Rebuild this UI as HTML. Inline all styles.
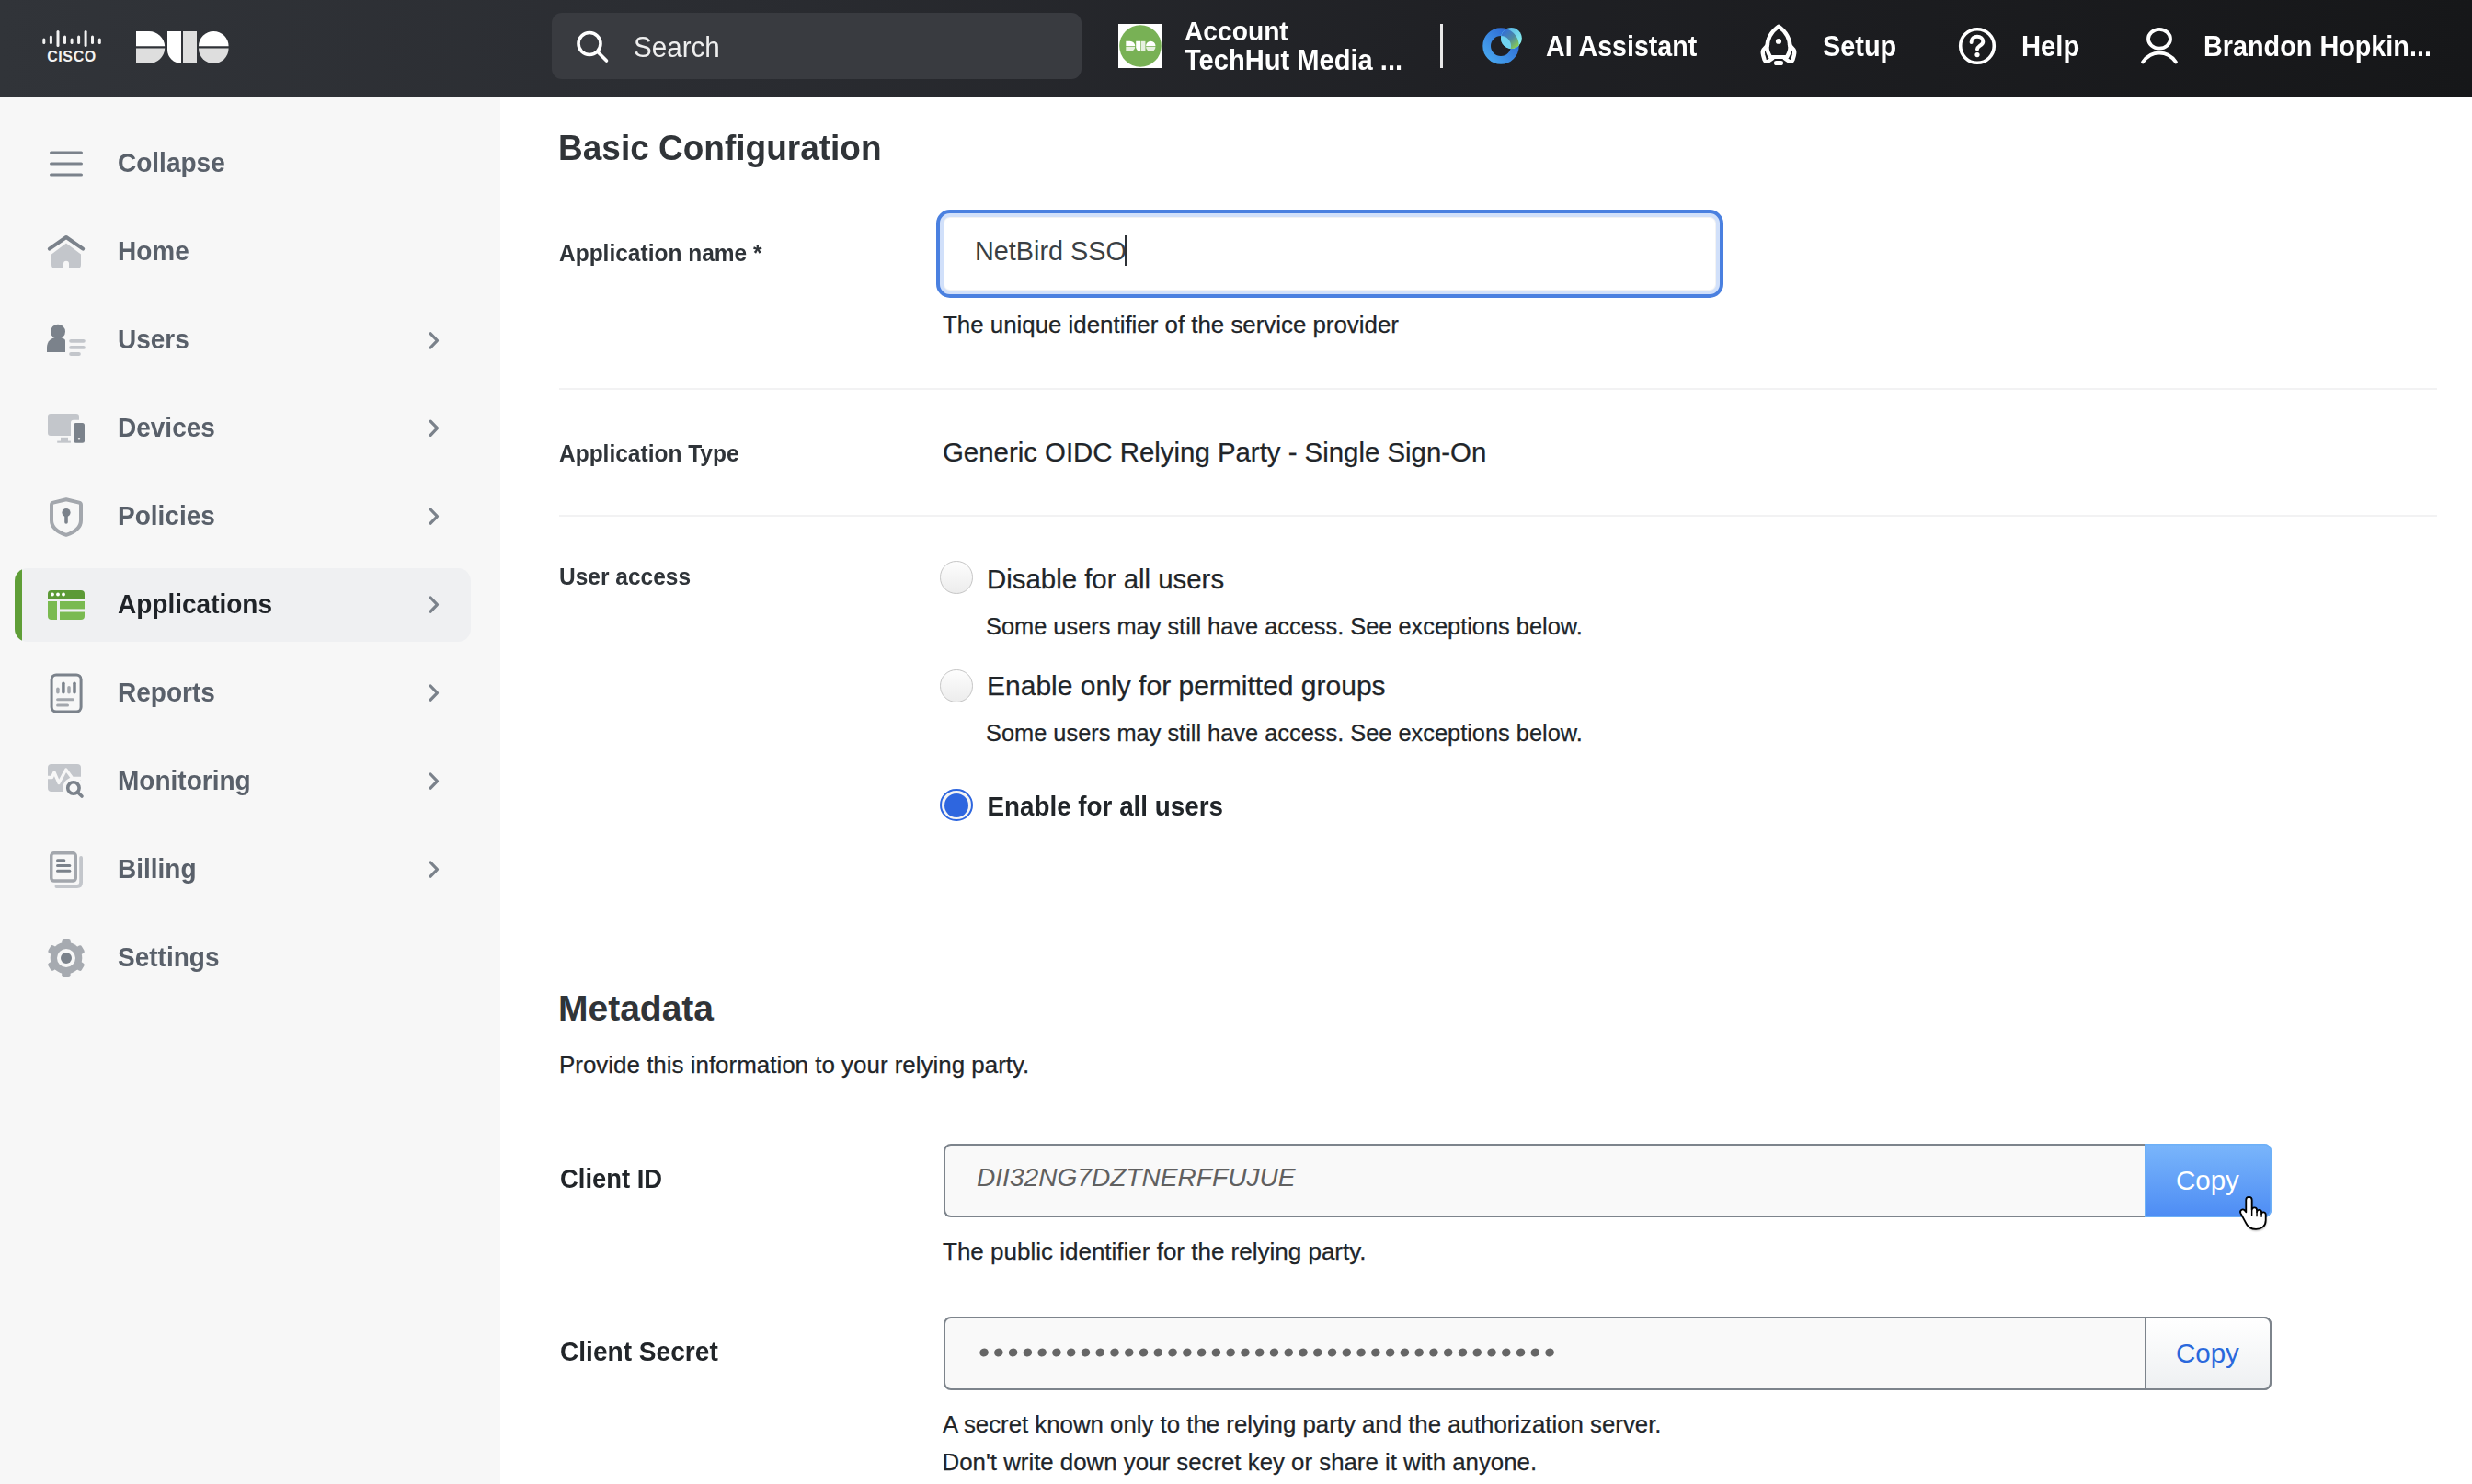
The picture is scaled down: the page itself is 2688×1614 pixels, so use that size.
<!DOCTYPE html>
<html><head><meta charset="utf-8">
<style>
*{box-sizing:border-box;margin:0;padding:0}
html,body{width:2688px;height:1614px;overflow:hidden;background:#fff;font-family:"Liberation Sans",sans-serif}
.a{position:absolute;white-space:nowrap;line-height:1}
.t{transform-origin:50% 48.85%}
.s105{transform:scaleY(1.05)}
.s107{transform:scaleY(1.07)}
#hdr{position:absolute;left:0;top:0;width:2688px;height:106px;background:linear-gradient(90deg,#313439 0%,#2a2c31 30%,#1f2024 60%,#161719 100%)}
#side{position:absolute;left:0;top:106px;width:544px;height:1508px;background:#f7f7f7}
.nav{font-size:28px;font-weight:700;color:#59606a;left:128px}
.chev{position:absolute;left:462px;width:20px;height:22px}
.lbl{font-size:24.5px;font-weight:700;color:#2f3439;left:608px}
.desc{font-size:26px;color:#212529;-webkit-text-stroke:0.25px #212529}
.big{font-size:29.4px;color:#212529;-webkit-text-stroke:0.25px #212529}
</style></head><body>
<div id="hdr">
  <!-- cisco -->
  <svg class="a" style="left:44px;top:30px" width="70" height="40" viewBox="0 0 70 40">
    <g stroke="#f2f2f2" stroke-width="3" stroke-linecap="round">
      <line x1="3.8" y1="13" x2="3.8" y2="16.5"/>
      <line x1="11.4" y1="10" x2="11.4" y2="16.5"/>
      <line x1="19" y1="4.5" x2="19" y2="19.5"/>
      <line x1="26.5" y1="10" x2="26.5" y2="16.5"/>
      <line x1="34.1" y1="13" x2="34.1" y2="16.5"/>
      <line x1="41.6" y1="10" x2="41.6" y2="16.5"/>
      <line x1="49.1" y1="4.5" x2="49.1" y2="19.5"/>
      <line x1="56.5" y1="10" x2="56.5" y2="16.5"/>
      <line x1="64.3" y1="13" x2="64.3" y2="16.5"/>
    </g>
    <text x="34" y="36.8" text-anchor="middle" font-family="Liberation Sans" font-weight="700" font-size="16" fill="#f2f2f2" letter-spacing="0.6">CISCO</text>
  </svg>
  <!-- duo -->
  <svg class="a" style="left:147px;top:33px" width="103" height="37" viewBox="0 0 103 37">
    <path d="M1 1 H15 A17.2 17.2 0 0 1 32.2 17.2 H1 Z" fill="#ffffff"/>
    <path d="M1 19.6 H32.2 A17.2 17.2 0 0 1 15 36 H1 Z" fill="#dedede"/>
    <path d="M35 1 H50 V36 A15 15 0 0 1 35 21 Z" fill="#ffffff"/>
    <rect x="52" y="1" width="15" height="35" fill="#dedede"/>
    <path d="M69 17.2 A16.3 16.3 0 0 1 101.6 17.2 Z" fill="#ffffff"/>
    <path d="M69 19.6 H101.6 A16.3 16.3 0 0 1 69 19.6 Z" fill="#dedede"/>
  </svg>
  <!-- search -->
  <div class="a" style="left:600px;top:14px;width:576px;height:72px;border-radius:11px;background:#393b40"></div>
  <svg class="a" style="left:622px;top:29px" width="44" height="44" viewBox="0 0 44 44">
    <circle cx="19" cy="18.5" r="12" fill="none" stroke="#fff" stroke-width="3.6"/>
    <line x1="28" y1="27.5" x2="37.5" y2="37" stroke="#fff" stroke-width="3.6" stroke-linecap="round"/>
  </svg>
  <div class="a t s107" style="left:689px;top:36px;font-size:29.6px;color:#eeeeee">Search</div>
  <!-- account -->
  <div class="a" style="left:1216px;top:26px;width:48px;height:48px;background:#fff"></div>
  <svg class="a" style="left:1216px;top:26px" width="48" height="48" viewBox="0 0 48 48">
    <circle cx="24" cy="24" r="22.8" fill="#78b155"/>
    <g transform="translate(8 18.5) scale(0.32)">
      <path d="M1 1 H15 A17.2 17.2 0 0 1 32.2 17.2 H1 Z" fill="#ffffff"/>
      <path d="M1 19.6 H32.2 A17.2 17.2 0 0 1 15 36 H1 Z" fill="#e6f0df"/>
      <path d="M35 1 H50 V36 A15 15 0 0 1 35 21 Z" fill="#ffffff"/>
      <rect x="52" y="1" width="15" height="35" fill="#e6f0df"/>
      <path d="M69 17.2 A16.3 16.3 0 0 1 101.6 17.2 Z" fill="#ffffff"/>
      <path d="M69 19.6 H101.6 A16.3 16.3 0 0 1 69 19.6 Z" fill="#e6f0df"/>
    </g>
  </svg>
  <div class="a t s107" style="left:1288px;top:18.8px;font-size:28.2px;font-weight:700;color:#fff">Account</div>
  <div class="a t s107" style="left:1288px;top:51px;font-size:29.1px;font-weight:700;color:#fff">TechHut Media ...</div>
  <div class="a" style="left:1566px;top:26px;width:3px;height:48px;background:#e8e8e8"></div>
  <!-- AI -->
  <svg class="a" style="left:1608px;top:26px" width="52" height="48" viewBox="0 0 52 48">
    <defs>
      <linearGradient id="rg" x1="0" y1="1" x2="1" y2="0"><stop offset="0" stop-color="#48a8f0"/><stop offset="1" stop-color="#2a62d0"/></linearGradient>
      <linearGradient id="bg2" gradientUnits="userSpaceOnUse" x1="27" y1="8" x2="42" y2="26"><stop offset="0" stop-color="#3470d6"/><stop offset="0.5" stop-color="#4f8aa0"/><stop offset="1" stop-color="#90d448"/></linearGradient>
      <linearGradient id="og" gradientUnits="userSpaceOnUse" x1="30" y1="5" x2="45" y2="22"><stop offset="0" stop-color="#58b4e6"/><stop offset="1" stop-color="#8af4ef"/></linearGradient>
      <clipPath id="sc"><circle cx="35.4" cy="15.5" r="11.4"/></clipPath>
    </defs>
    <circle cx="24" cy="24" r="15.35" fill="none" stroke="url(#rg)" stroke-width="8.7"/>
    <circle cx="35.4" cy="15.5" r="11.4" fill="url(#og)"/>
    <circle cx="24" cy="24" r="19.7" fill="#6fd3f0" clip-path="url(#sc)"/>
    <circle cx="24" cy="24" r="15.35" fill="none" stroke="url(#bg2)" stroke-width="8.7" clip-path="url(#sc)"/>
  </svg>
  <div class="a t s107" style="left:1681px;top:36px;font-size:28.6px;font-weight:700;color:#fff">AI Assistant</div>
  <!-- setup -->
  <svg class="a" style="left:1912px;top:25px" width="44" height="50" viewBox="0 0 44 50">
    <g transform="scale(1 0.925)">
    <g fill="none" stroke="#fff" stroke-width="4.4" stroke-linejoin="round" stroke-linecap="round">
      <path d="M22 4 C13 11 9.5 20 9.5 29 C9.5 33 10.8 36 13 40 H31 C33.2 36 34.5 33 34.5 29 C34.5 20 31 11 22 4 Z"/>
      <path d="M10 26 L5.5 31.5 C4.5 33 4.5 35 5.2 38 L6.5 43 C7.3 45.5 9.5 46 11.5 44.5 L15.5 41.5"/>
      <path d="M34 26 L38.5 31.5 C39.5 33 39.5 35 38.8 38 L37.5 43 C36.7 45.5 34.5 46 32.5 44.5 L28.5 41.5"/>
    </g>
    <circle cx="22" cy="21.5" r="3.1" fill="#fff"/>
    <rect x="17" y="44.4" width="10" height="5.4" rx="2.6" fill="#fff"/>
    </g>
  </svg>
  <div class="a t s107" style="left:1982px;top:35.5px;font-size:28.9px;font-weight:700;color:#fff">Setup</div>
  <!-- help -->
  <svg class="a" style="left:2128px;top:28px" width="44" height="44" viewBox="0 0 44 44">
    <circle cx="22" cy="22" r="18.3" fill="none" stroke="#fff" stroke-width="3.6"/>
    <path d="M15.6 18 C15.6 13.8 18.5 11.8 22 11.8 C25.5 11.8 28.3 14 28.3 17.2 C28.3 20 26 21 24.2 22.3 C22.7 23.3 22 24.2 22 25.5" fill="none" stroke="#fff" stroke-width="4" stroke-linecap="round"/>
    <circle cx="22" cy="31.6" r="2.6" fill="#fff"/>
  </svg>
  <div class="a t s107" style="left:2198px;top:35.5px;font-size:29.2px;font-weight:700;color:#fff">Help</div>
  <!-- user -->
  <svg class="a" style="left:2326px;top:28px" width="44" height="44" viewBox="0 0 44 44">
    <ellipse cx="22" cy="14.3" rx="12" ry="10.4" fill="none" stroke="#fff" stroke-width="3.8"/>
    <path d="M4 39.5 C9 32.5 14.5 29.5 22 29.5 C29.5 29.5 35 32.5 40 39.5" fill="none" stroke="#fff" stroke-width="3.8" stroke-linecap="round"/>
  </svg>
  <div class="a t s107" style="left:2396px;top:35.5px;font-size:28.8px;font-weight:700;color:#fff">Brandon Hopkin...</div>
</div>

<div id="side"></div>
<!-- sidebar icons -->
<svg class="a" style="left:0;top:106px" width="544" height="1000" viewBox="0 106 544 1000">
  <g stroke="#7b828b" stroke-width="3.2" stroke-linecap="round">
    <line x1="55.6" y1="166" x2="88.4" y2="166"/><line x1="55.6" y1="178" x2="88.4" y2="178"/><line x1="55.6" y1="190" x2="88.4" y2="190"/>
  </g>
  <!-- home -->
  <path d="M53.8 270.6 L72 258 L90.2 270.6" fill="none" stroke="#7b828b" stroke-width="4" stroke-linecap="round" stroke-linejoin="round"/>
  <path d="M56 276.5 L72 264.5 L88 276.5 V288 Q88 292 84 292 H75 V286.8 Q75 283.8 72 283.8 Q69 283.8 69 286.8 V292 H60 Q56 292 56 288 Z" fill="#c3c6cb"/>
  <!-- users -->
  <circle cx="63" cy="360.7" r="8" fill="#7b828b"/>
  <path d="M51 383 V378 C51 371 56 366.8 63 366.8 C67 366.8 71 368.5 71 370.5 V383 Z" fill="#7b828b"/>
  <g stroke="#c3c6cb" stroke-width="3.8" stroke-linecap="round">
    <line x1="77.1" y1="370.8" x2="90.9" y2="370.8"/><line x1="77.1" y1="377.9" x2="90.9" y2="377.9"/><line x1="77.1" y1="385" x2="85.9" y2="385"/>
  </g>
  <!-- devices -->
  <path d="M55 450 H83 Q86 450 86 453 V456.7 H80 Q77 456.7 77 459.7 V474 H55 Q52 474 52 471 V453 Q52 450 55 450 Z" fill="#c3c6cb"/>
  <rect x="66" y="475.8" width="8" height="4.5" fill="#c3c6cb"/>
  <rect x="62.2" y="479.6" width="14.7" height="2.1" fill="#c3c6cb"/>
  <rect x="80" y="460" width="12" height="21.7" rx="2.5" fill="#7b828b"/>
  <circle cx="86" cy="477.3" r="1.3" fill="#f0f0f0"/>
  <!-- policies -->
  <path d="M72 543.2 L58 546.6 Q56 547.1 56 549 V566 C56 573 62 578.5 72 581.8 C82 578.5 88 573 88 566 V549 Q88 547.1 86 546.6 Z" fill="none" stroke="#a3a7ad" stroke-width="4" stroke-linejoin="round"/>
  <circle cx="72" cy="557.5" r="4.6" fill="#7b828b"/>
  <line x1="72" y1="558" x2="72" y2="568" stroke="#7b828b" stroke-width="3.6" stroke-linecap="round"/>
</svg>
<div class="a" style="left:16px;top:618px;width:496px;height:80px;border-radius:14px;background:#eff0f2;overflow:hidden"><div style="position:absolute;left:0;top:0;width:8px;height:80px;background:#5f9e37"></div></div>
<svg class="a" style="left:0;top:600px" width="544" height="500" viewBox="0 600 544 500">
  <!-- applications -->
  <path d="M52 646 Q52 642 56 642 H88 Q92 642 92 646 V651 H52 Z" fill="#5c9a36"/>
  <circle cx="57" cy="646.5" r="1.9" fill="#fff"/><circle cx="63" cy="646.5" r="1.9" fill="#fff"/><circle cx="69" cy="646.5" r="1.9" fill="#fff"/>
  <path d="M52 654 H62 V674 H56 Q52 674 52 670 Z" fill="#7aba50"/>
  <rect x="65" y="654" width="27" height="8.4" fill="#7aba50"/>
  <path d="M65 665.6 H92 V670 Q92 674 88 674 H65 Z" fill="#7aba50"/>
  <!-- reports -->
  <rect x="56.1" y="733.9" width="32" height="40.2" rx="5" fill="none" stroke="#7b828b" stroke-width="3"/>
  <g stroke-width="3.5" stroke-linecap="round">
    <line x1="62.9" y1="749.3" x2="62.9" y2="752.8" stroke="#a3a7ad"/>
    <line x1="68.9" y1="743.2" x2="68.9" y2="752.8" stroke="#7b828b"/>
    <line x1="75" y1="747.7" x2="75" y2="752.8" stroke="#a3a7ad"/>
    <line x1="81" y1="743.2" x2="81" y2="752.8" stroke="#7b828b"/>
  </g>
  <g stroke="#a3a7ad" stroke-width="3" stroke-linecap="round">
    <line x1="62.6" y1="760.8" x2="79.3" y2="760.8"/><line x1="62.6" y1="766.9" x2="73.5" y2="766.9"/>
  </g>
  <!-- monitoring -->
  <rect x="52" y="831" width="36" height="30" rx="4" fill="#c3c6cb"/>
  <polyline points="50,845.5 56.5,845.5 59,840 64,851.5 71.8,837 78.8,846.5 90,846.5" fill="none" stroke="#f7f7f7" stroke-width="3.3" stroke-linejoin="round"/>
  <circle cx="79.9" cy="857" r="11.5" fill="#f7f7f7"/>
  <circle cx="79.9" cy="857" r="6.2" fill="none" stroke="#7b828b" stroke-width="3.6"/>
  <line x1="84.6" y1="861.7" x2="89" y2="866" stroke="#7b828b" stroke-width="3.6" stroke-linecap="round"/>
  <!-- billing -->
  <rect x="55.75" y="927.75" width="26.5" height="30.3" rx="3" fill="none" stroke="#a3a7ad" stroke-width="3.5"/>
  <path d="M61.4 964 H83.8 Q88.1 964 88.1 959.7 V933" fill="none" stroke="#c3c6cb" stroke-width="3.8" stroke-linecap="round"/>
  <g stroke="#7b828b" stroke-width="3" stroke-linecap="round">
    <line x1="62.5" y1="935.7" x2="69.8" y2="935.7"/><line x1="62.5" y1="941.6" x2="75.8" y2="941.6"/><line x1="62.5" y1="947.2" x2="75.8" y2="947.2"/>
  </g>
  <!-- settings -->
  <g fill="#a6aab0" transform="translate(72 1042)">
    <circle r="17.3"/>
    <rect x="-4.6" y="-21" width="9.4" height="8" rx="2.2"/>
    <rect x="-4.6" y="-21" width="9.4" height="8" rx="2.2" transform="rotate(60)"/>
    <rect x="-4.6" y="-21" width="9.4" height="8" rx="2.2" transform="rotate(120)"/>
    <rect x="-4.6" y="-21" width="9.4" height="8" rx="2.2" transform="rotate(180)"/>
    <rect x="-4.6" y="-21" width="9.4" height="8" rx="2.2" transform="rotate(240)"/>
    <rect x="-4.6" y="-21" width="9.4" height="8" rx="2.2" transform="rotate(300)"/>
    <circle r="10" fill="#f7f7f7"/>
    <circle r="6" fill="#7b828b"/>
  </g>
</svg>
<div class="a nav t s105" style="top:164.1px">Collapse</div>
<div class="a nav t s105" style="top:259.8px">Home</div>
<div class="a nav t s105" style="top:355.8px">Users</div>
<div class="a nav t s105" style="top:451.9px">Devices</div>
<div class="a nav t s105" style="top:547.9px">Policies</div>
<div class="a nav t s105" style="top:643.9px;color:#1f2328">Applications</div>
<div class="a nav t s105" style="top:739.9px">Reports</div>
<div class="a nav t s105" style="top:835.9px">Monitoring</div>
<div class="a nav t s105" style="top:931.9px">Billing</div>
<div class="a nav t s105" style="top:1027.9px">Settings</div>
<svg class="a" style="left:0;top:0" width="544" height="1100" viewBox="0 0 544 1100">
  <g fill="none" stroke="#7b828b" stroke-width="3.2" stroke-linecap="round" stroke-linejoin="round">
    <polyline points="468.2,362.8 475.5,370.4 468.2,378"/>
    <polyline points="468.2,458.1 475.5,465.7 468.2,473.3"/>
    <polyline points="468.2,554 475.5,561.6 468.2,569.2"/>
    <polyline points="468.2,650 475.5,657.6 468.2,665.2"/>
    <polyline points="468.2,746 475.5,753.6 468.2,761.2"/>
    <polyline points="468.2,842 475.5,849.6 468.2,857.2"/>
    <polyline points="468.2,938 475.5,945.6 468.2,953.2"/>
  </g>
</svg>

<!-- main -->
<div class="a t" style="transform:scaleY(1.025);left:607px;top:142.5px;font-size:37px;font-weight:700;color:#303438">Basic Configuration</div>
<div class="a lbl t s105" style="top:263.5px">Application name *</div>
<div class="a" style="left:1018px;top:228px;width:856px;height:96px;border:4px solid #4a80e0;border-radius:15px;box-shadow:inset 0 0 0 4px #d1e0fa,inset 0 0 0 5px #f3f3f3;background:#fff"></div>
<div class="a t" style="left:1060px;top:258.9px;font-size:28.8px;color:#3a3f44">NetBird SSO</div>
<div class="a" style="left:1223px;top:256.4px;width:3px;height:33px;background:#2d3136"></div>
<div class="a desc t" style="left:1025px;top:340.6px;font-size:25.87px">The unique identifier of the service provider</div>
<div class="a" style="left:608px;top:422px;width:2042px;height:2px;background:#f2f2f3"></div>
<div class="a lbl t s105" style="top:481.6px">Application Type</div>
<div class="a big t" style="left:1025px;top:476.5px">Generic OIDC Relying Party - Single Sign-On</div>
<div class="a" style="left:608px;top:560px;width:2042px;height:2px;background:#f2f2f3"></div>
<div class="a lbl t s105" style="top:615.8px">User access</div>

<div class="a" style="left:1022.2px;top:610px;width:35.5px;height:35.5px;border-radius:50%;border:1.6px solid #c5c5c5;background:linear-gradient(#fdfdfd,#ececec)"></div>
<div class="a big t" style="left:1073px;top:615.4px">Disable for all users</div>
<div class="a desc t" style="left:1072px;top:668.6px;font-size:25.38px">Some users may still have access. See exceptions below.</div>
<div class="a" style="left:1022.2px;top:728px;width:35.5px;height:35.5px;border-radius:50%;border:1.6px solid #c5c5c5;background:linear-gradient(#fdfdfd,#ececec)"></div>
<div class="a big t" style="left:1073px;top:731px;font-size:30px">Enable only for permitted groups</div>
<div class="a desc t" style="left:1072px;top:784.9px;font-size:25.38px">Some users may still have access. See exceptions below.</div>
<div class="a" style="left:1022.2px;top:857.7px;width:35.5px;height:35.5px;border-radius:50%;border:2.2px solid #2e66df;background:#f4f4f4"></div>
<div class="a" style="left:1027px;top:862.5px;width:26px;height:26px;border-radius:50%;background:#2e66df"></div>
<div class="a t s105" style="left:1073.5px;top:863.5px;font-size:27.8px;font-weight:700;color:#212529">Enable for all users</div>

<div class="a t" style="transform:none;left:607px;top:1077px;font-size:39px;font-weight:700;color:#303438">Metadata</div>
<div class="a desc t" style="left:608px;top:1145.5px;font-size:25.94px">Provide this information to your relying party.</div>

<div class="a t s107" style="left:609px;top:1268.4px;font-size:27.4px;font-weight:700;color:#212529">Client ID</div>
<div class="a" style="left:1026px;top:1244px;width:1308px;height:80px;border:2px solid #7d848c;border-right:none;border-radius:8px 0 0 8px;background:#f9f9f9"></div>
<div class="a t" style="left:1062px;top:1266.5px;font-size:28.1px;font-style:italic;color:#606060">DII32NG7DZTNERFFUJUE</div>
<div class="a" style="left:2332px;top:1244px;width:138px;height:80px;border-radius:0 8px 8px 0;background:linear-gradient(#7ab6fb,#4d8cf4);box-shadow:inset 0 0 0 1.5px #6db0f7"></div>
<div class="a t" style="left:2366px;top:1269.4px;font-size:29.5px;color:#fff">Copy</div>
<div class="a desc t" style="left:1025px;top:1348.3px">The public identifier for the relying party.</div>

<div class="a t s107" style="left:609px;top:1455.7px;font-size:28.1px;font-weight:700;color:#212529">Client Secret</div>
<div class="a" style="left:1026px;top:1432px;width:1444px;height:80px;border:2px solid #7d848c;border-radius:8px;background:#f9f9f9"></div>
<div class="a" style="left:2332px;top:1432px;width:138px;height:80px;border:2px solid #7d848c;border-radius:0 8px 8px 0;background:linear-gradient(#ffffff,#eef0f2)"></div>
<svg class="a" style="left:1060px;top:1460px" width="640" height="22" viewBox="0 0 640 22" id="dots"><ellipse cx="10.05" cy="11" rx="4.8" ry="4.5" transform="rotate(-25 10.05 11)" fill="#666"/><ellipse cx="25.82" cy="11" rx="4.8" ry="4.5" transform="rotate(-25 25.82 11)" fill="#666"/><ellipse cx="41.59" cy="11" rx="4.8" ry="4.5" transform="rotate(-25 41.59 11)" fill="#666"/><ellipse cx="57.36" cy="11" rx="4.8" ry="4.5" transform="rotate(-25 57.36 11)" fill="#666"/><ellipse cx="73.13" cy="11" rx="4.8" ry="4.5" transform="rotate(-25 73.13 11)" fill="#666"/><ellipse cx="88.90" cy="11" rx="4.8" ry="4.5" transform="rotate(-25 88.90 11)" fill="#666"/><ellipse cx="104.67" cy="11" rx="4.8" ry="4.5" transform="rotate(-25 104.67 11)" fill="#666"/><ellipse cx="120.44" cy="11" rx="4.8" ry="4.5" transform="rotate(-25 120.44 11)" fill="#666"/><ellipse cx="136.21" cy="11" rx="4.8" ry="4.5" transform="rotate(-25 136.21 11)" fill="#666"/><ellipse cx="151.98" cy="11" rx="4.8" ry="4.5" transform="rotate(-25 151.98 11)" fill="#666"/><ellipse cx="167.75" cy="11" rx="4.8" ry="4.5" transform="rotate(-25 167.75 11)" fill="#666"/><ellipse cx="183.52" cy="11" rx="4.8" ry="4.5" transform="rotate(-25 183.52 11)" fill="#666"/><ellipse cx="199.29" cy="11" rx="4.8" ry="4.5" transform="rotate(-25 199.29 11)" fill="#666"/><ellipse cx="215.06" cy="11" rx="4.8" ry="4.5" transform="rotate(-25 215.06 11)" fill="#666"/><ellipse cx="230.83" cy="11" rx="4.8" ry="4.5" transform="rotate(-25 230.83 11)" fill="#666"/><ellipse cx="246.60" cy="11" rx="4.8" ry="4.5" transform="rotate(-25 246.60 11)" fill="#666"/><ellipse cx="262.37" cy="11" rx="4.8" ry="4.5" transform="rotate(-25 262.37 11)" fill="#666"/><ellipse cx="278.14" cy="11" rx="4.8" ry="4.5" transform="rotate(-25 278.14 11)" fill="#666"/><ellipse cx="293.91" cy="11" rx="4.8" ry="4.5" transform="rotate(-25 293.91 11)" fill="#666"/><ellipse cx="309.68" cy="11" rx="4.8" ry="4.5" transform="rotate(-25 309.68 11)" fill="#666"/><ellipse cx="325.45" cy="11" rx="4.8" ry="4.5" transform="rotate(-25 325.45 11)" fill="#666"/><ellipse cx="341.22" cy="11" rx="4.8" ry="4.5" transform="rotate(-25 341.22 11)" fill="#666"/><ellipse cx="356.99" cy="11" rx="4.8" ry="4.5" transform="rotate(-25 356.99 11)" fill="#666"/><ellipse cx="372.76" cy="11" rx="4.8" ry="4.5" transform="rotate(-25 372.76 11)" fill="#666"/><ellipse cx="388.53" cy="11" rx="4.8" ry="4.5" transform="rotate(-25 388.53 11)" fill="#666"/><ellipse cx="404.30" cy="11" rx="4.8" ry="4.5" transform="rotate(-25 404.30 11)" fill="#666"/><ellipse cx="420.07" cy="11" rx="4.8" ry="4.5" transform="rotate(-25 420.07 11)" fill="#666"/><ellipse cx="435.84" cy="11" rx="4.8" ry="4.5" transform="rotate(-25 435.84 11)" fill="#666"/><ellipse cx="451.61" cy="11" rx="4.8" ry="4.5" transform="rotate(-25 451.61 11)" fill="#666"/><ellipse cx="467.38" cy="11" rx="4.8" ry="4.5" transform="rotate(-25 467.38 11)" fill="#666"/><ellipse cx="483.15" cy="11" rx="4.8" ry="4.5" transform="rotate(-25 483.15 11)" fill="#666"/><ellipse cx="498.92" cy="11" rx="4.8" ry="4.5" transform="rotate(-25 498.92 11)" fill="#666"/><ellipse cx="514.69" cy="11" rx="4.8" ry="4.5" transform="rotate(-25 514.69 11)" fill="#666"/><ellipse cx="530.46" cy="11" rx="4.8" ry="4.5" transform="rotate(-25 530.46 11)" fill="#666"/><ellipse cx="546.23" cy="11" rx="4.8" ry="4.5" transform="rotate(-25 546.23 11)" fill="#666"/><ellipse cx="562.00" cy="11" rx="4.8" ry="4.5" transform="rotate(-25 562.00 11)" fill="#666"/><ellipse cx="577.77" cy="11" rx="4.8" ry="4.5" transform="rotate(-25 577.77 11)" fill="#666"/><ellipse cx="593.54" cy="11" rx="4.8" ry="4.5" transform="rotate(-25 593.54 11)" fill="#666"/><ellipse cx="609.31" cy="11" rx="4.8" ry="4.5" transform="rotate(-25 609.31 11)" fill="#666"/><ellipse cx="625.08" cy="11" rx="4.8" ry="4.5" transform="rotate(-25 625.08 11)" fill="#666"/></svg>
<div class="a t" style="left:2366px;top:1457.2px;font-size:29.5px;color:#2a68dc">Copy</div>
<div class="a desc t" style="left:1025px;top:1536.6px;font-size:25.8px">A secret known only to the relying party and the authorization server.</div>
<div class="a desc t" style="left:1024.5px;top:1577.8px;font-size:25.84px">Don't write down your secret key or share it with anyone.</div>

<!-- cursor -->
<svg class="a" style="left:2427.2px;top:1294.6px" width="46" height="48" viewBox="0 0 46 48"><g transform="translate(23 24) scale(0.965) translate(-23 -24)">
  <defs><filter id="cs" x="-30%" y="-30%" width="160%" height="160%"><feGaussianBlur stdDeviation="1.2"/></filter></defs>
  <path d="M15 9.5 C15 5.2 21.6 5.2 21.6 9.5 V20.5 C22.2 17.3 27.2 17.3 27.2 21 V23 C27.8 20 32.4 20 32.4 23.5 V25 C33 22.4 37.2 22.8 37.2 26.2 V32.5 C37.2 39 32.5 42.6 26.2 42.6 C20.4 42.6 16.6 39.6 14.6 35 L9 24.6 C7.4 21.4 11 18.7 13.6 21.4 L15 23.2 Z" fill="#000" opacity="0.35" transform="translate(0.6 1.6)" filter="url(#cs)"/>
  <path d="M15 9.5 C15 5.2 21.6 5.2 21.6 9.5 V20.5 C22.2 17.3 27.2 17.3 27.2 21 V23 C27.8 20 32.4 20 32.4 23.5 V25 C33 22.4 37.2 22.8 37.2 26.2 V32.5 C37.2 39 32.5 42.6 26.2 42.6 C20.4 42.6 16.6 39.6 14.6 35 L9 24.6 C7.4 21.4 11 18.7 13.6 21.4 L15 23.2 Z" fill="#fff" stroke="#000" stroke-width="1.9" stroke-linejoin="round"/>
  <path d="M21.6 20.5 V27.5 M27.2 23 V28.5 M32.4 25 V29" stroke="#000" stroke-width="1.5"/>
</g></svg>

</body></html>
